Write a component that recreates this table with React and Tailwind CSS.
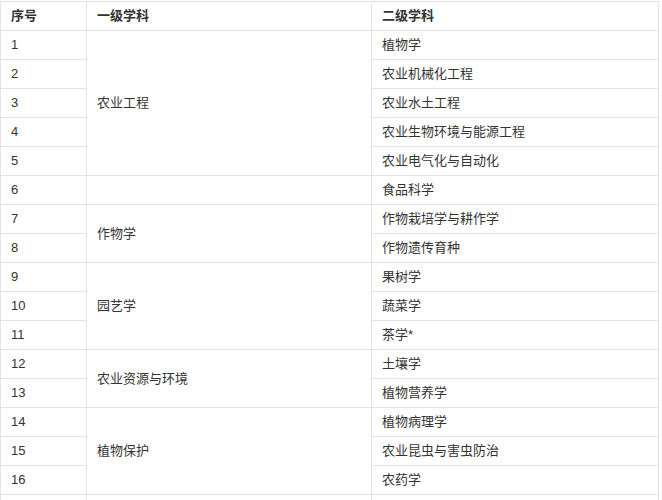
const rows = [
  { no: 1, first: "农业工程", span: 5, second: "植物学" },
  { no: 2, second: "农业机械化工程" },
  { no: 3, second: "农业水土工程" },
  { no: 4, second: "农业生物环境与能源工程" },
  { no: 5, second: "农业电气化与自动化" },
  { no: 6, first: "", span: 1, second: "食品科学" },
  { no: 7, first: "作物学", span: 2, second: "作物栽培学与耕作学" },
  { no: 8, second: "作物遗传育种" },
  { no: 9, first: "园艺学", span: 3, second: "果树学" },
  { no: 10, second: "蔬菜学" },
  { no: 11, second: "茶学*" },
  { no: 12, first: "农业资源与环境", span: 2, second: "土壤学" },
  { no: 13, second: "植物营养学" },
  { no: 14, first: "植物保护", span: 3, second: "植物病理学" },
  { no: 15, second: "农业昆虫与害虫防治" },
  { no: 16, second: "农药学" },
  { no: "", first: "", span: 1, second: "" },
];

const cell = "border border-[#e3e3e3] px-[10px] align-middle";

export default function App() {
  return (
    <div className="bg-white pt-px" style={{ fontFamily: '"Liberation Sans", Arial, "Noto Sans CJK SC", sans-serif' }}>
      <table className="border-collapse table-fixed w-[658px] text-[13px] text-[#333] leading-[18px]">
        <colgroup>
          <col className="w-[86px]" />
          <col className="w-[285px]" />
          <col className="w-[287px]" />
        </colgroup>
        <thead>
          <tr className="h-[29px]">
            <th className={`${cell} text-left font-bold`}>序号</th>
            <th className={`${cell} text-left font-bold`}>一级学科</th>
            <th className={`${cell} text-left font-bold`}>二级学科</th>
          </tr>
        </thead>
        <tbody>
          {rows.map((r, i) => (
            <tr key={i} className="h-[29px]">
              <td className={cell}>{r.no}</td>
              {r.span && (
                <td className={cell} rowSpan={r.span}>
                  {r.first}
                </td>
              )}
              <td className={cell}>{r.second}</td>
            </tr>
          ))}
        </tbody>
      </table>
    </div>
  );
}
